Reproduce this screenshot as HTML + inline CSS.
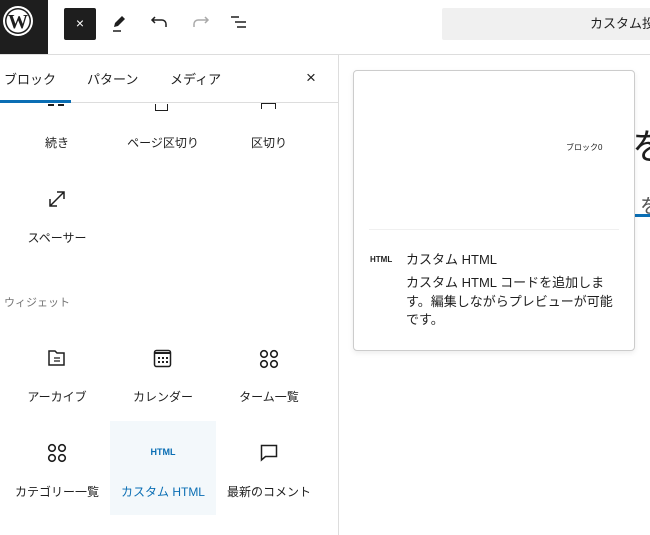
<!DOCTYPE html>
<html><head><meta charset="utf-8"><style>
*{margin:0;padding:0;box-sizing:border-box}
body{width:650px;height:535px;overflow:hidden;background:#fff;font-family:"Liberation Sans","Noto Sans CJK JP",sans-serif;color:#1e1e1e;position:relative}
.a{position:absolute}
.lbl{position:absolute;font-size:12px;text-align:center;width:106px;color:#1e1e1e}
</style></head><body>
<!-- top bar -->
<div class="a" style="left:0;top:0;width:48px;height:54px;background:#1e1e1e"></div>
<svg class="a" style="left:2px;top:3px" width="34" height="36" viewBox="0 0 34 36"><circle cx="16" cy="18" r="15" fill="#fff"/><circle cx="16" cy="18" r="13" fill="#1e1e1e"/><circle cx="16" cy="18" r="11.5" fill="#fff"/><text x="16" y="25" text-anchor="middle" font-family="Liberation Serif" font-weight="bold" font-size="20" fill="#1e1e1e">W</text></svg>
<div class="a" style="left:64px;top:8px;width:32px;height:32px;background:#1e1e1e;border-radius:2px;color:#fff;font-size:14px;text-align:center;line-height:31px">×</div>
<svg class="a" style="left:110px;top:12px" width="20" height="22" viewBox="0 0 20 22"><path d="M12 4l3 3-7 7-4 1 1-4z" fill="#1e1e1e"/><path d="M3 19h8" stroke="#1e1e1e" stroke-width="1.5"/></svg>
<svg class="a" style="left:150px;top:14px" width="20" height="18" viewBox="0 0 20 18"><path d="M5 3L2 6l3 3M2 6h10a4 4 0 014 4v3" fill="none" stroke="#1e1e1e" stroke-width="1.5"/></svg>
<svg class="a" style="left:190px;top:14px" width="20" height="18" viewBox="0 0 20 18"><path d="M15 3l3 3-3 3M18 6H8a4 4 0 00-4 4v3" fill="none" stroke="#aaa" stroke-width="1.5"/></svg>
<svg class="a" style="left:229px;top:15px" width="22" height="18" viewBox="0 0 22 18"><path d="M2 2h8M6 7h11M8 12h9" stroke="#1e1e1e" stroke-width="1.5"/></svg>
<div class="a" style="left:442px;top:8px;width:220px;height:32px;background:#f0f0f0;border-radius:2px;font-size:13px;line-height:32px;padding-left:148px;white-space:nowrap">カスタム投稿</div>
<div class="a" style="left:0;top:54px;width:650px;height:1px;background:#ddd"></div>
<!-- sidebar -->
<div class="a" style="left:338px;top:54px;width:1px;height:481px;background:#ddd"></div>
<div class="a" style="left:0;top:102px;width:338px;height:1px;background:#ddd"></div>
<div class="a" style="left:0;top:100px;width:71px;height:3px;background:#0a6eb4"></div>
<div class="a" style="left:4px;top:69px;font-size:13px">ブロック</div>
<div class="a" style="left:87px;top:69px;font-size:13px">パターン</div>
<div class="a" style="left:170px;top:69px;font-size:13px">メディア</div>
<div class="a" style="left:306px;top:68px;font-size:17px">×</div>
<div class="a" style="left:48px;top:104px;width:16px;height:2px;border-top:2px dashed #1e1e1e"></div>
<div class="a" style="left:155px;top:104px;width:13px;height:7px;border:1.5px solid #1e1e1e;border-top:none"></div>
<div class="a" style="left:261px;top:103px;width:15px;height:6px;border-left:1.5px solid #1e1e1e;border-right:1.5px solid #1e1e1e;border-top:1.5px solid #1e1e1e"></div>
<div class="lbl" style="left:4px;top:134px">続き</div>
<div class="lbl" style="left:110px;top:134px">ページ区切り</div>
<div class="lbl" style="left:216px;top:134px">区切り</div>
<svg class="a" style="left:48px;top:190px" width="18" height="18" viewBox="0 0 18 18"><path d="M2 16L16 2M9 2h7v7M2 9v7h7" fill="none" stroke="#1e1e1e" stroke-width="1.5"/></svg>
<div class="lbl" style="left:4px;top:229px">スペーサー</div>
<div class="a" style="left:4px;top:294px;font-size:11px;color:#757575">ウィジェット</div>
<svg class="a" style="left:47px;top:349px" width="20" height="18" viewBox="0 0 20 18"><path d="M2 2h6l2 2h7v12H2z" fill="none" stroke="#1e1e1e" stroke-width="1.5"/><path d="M7 9h6M7 12h6" stroke="#1e1e1e" stroke-width="1.3"/></svg>
<svg class="a" style="left:153px;top:349px" width="20" height="20" viewBox="0 0 20 20"><rect x="1.5" y="1.5" width="16" height="16" rx="2" fill="none" stroke="#1e1e1e" stroke-width="1.5"/><path d="M2 3h15v2H2z" fill="#1e1e1e"/><g fill="#1e1e1e"><rect x="5" y="8" width="2" height="2"/><rect x="9" y="8" width="2" height="2"/><rect x="13" y="8" width="2" height="2"/><rect x="5" y="12" width="2" height="2"/><rect x="9" y="12" width="2" height="2"/><rect x="13" y="12" width="2" height="2"/></g></svg>
<svg class="a" style="left:259px;top:349px" width="20" height="20" viewBox="0 0 20 20" fill="none" stroke="#1e1e1e" stroke-width="1.6"><circle cx="5" cy="5" r="3.3"/><circle cx="15" cy="5" r="3.3"/><circle cx="5" cy="15" r="3.3"/><circle cx="15" cy="15" r="3.3"/></svg>
<div class="lbl" style="left:4px;top:388px">アーカイブ</div>
<div class="lbl" style="left:110px;top:388px">カレンダー</div>
<div class="lbl" style="left:216px;top:388px">ターム一覧</div>
<div class="a" style="left:110px;top:421px;width:106px;height:94px;background:#f3f8fb"></div>
<svg class="a" style="left:47px;top:443px" width="20" height="20" viewBox="0 0 20 20" fill="none" stroke="#1e1e1e" stroke-width="1.6"><circle cx="5" cy="5" r="3.3"/><circle cx="15" cy="5" r="3.3"/><circle cx="5" cy="15" r="3.3"/><circle cx="15" cy="15" r="3.3"/></svg>
<div class="a" style="left:110px;top:447px;width:106px;text-align:center;font-size:9px;font-weight:bold;color:#0a6eb4">HTML</div>
<svg class="a" style="left:259px;top:443px" width="20" height="20" viewBox="0 0 20 20"><path d="M2.5 2.5h15v11h-11l-4 3.5z" fill="none" stroke="#1e1e1e" stroke-width="1.5"/></svg>
<div class="lbl" style="left:4px;top:483px">カテゴリー一覧</div>
<div class="lbl" style="left:110px;top:483px;color:#0a6eb4">カスタム HTML</div>
<div class="lbl" style="left:216px;top:483px">最新のコメント</div>
<!-- canvas behind -->
<div class="a" style="left:632px;top:118px;font-size:36px">を</div>
<div class="a" style="left:640px;top:190px;font-size:20px;color:#555">を</div>
<div class="a" style="left:635px;top:214px;width:15px;height:3px;background:#0a6eb4"></div>
<!-- popover -->
<div class="a" style="left:353px;top:70px;width:282px;height:281px;background:#fff;border:1px solid #ccc;border-radius:4px;box-shadow:0 2px 6px rgba(0,0,0,.08)"></div>
<div class="a" style="left:369px;top:229px;width:250px;height:1px;background:#f0f0f0"></div>
<div class="a" style="left:566px;top:142px;font-size:8px;white-space:nowrap">ブロック0</div>
<div class="a" style="left:370px;top:255px;font-size:8px;font-weight:bold">HTML</div>
<div class="a" style="left:406px;top:249px;font-size:13px">カスタム HTML</div>
<div class="a" style="left:406px;top:274px;width:210px;font-size:13px;line-height:18.5px">カスタム HTML コードを追加します。編集しながらプレビューが可能です。</div>
</body></html>
